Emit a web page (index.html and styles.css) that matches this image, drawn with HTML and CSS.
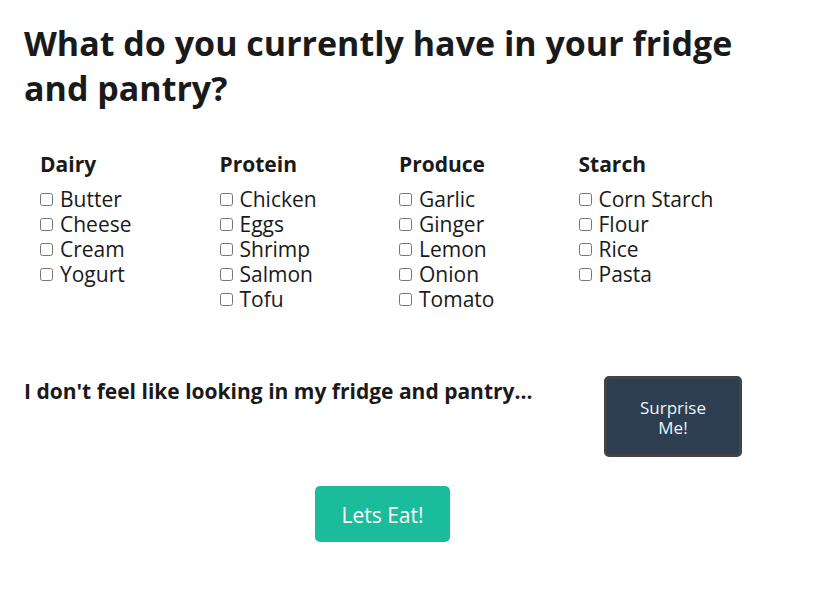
FILE: index.html
```html
<!DOCTYPE html>
<html lang="en">
<head>
<meta charset="utf-8">
<title>Fridge and pantry</title>
<link rel="stylesheet" href="styles.css">
</head>
<body>
<main class="page">
  <h1 class="title">What do you currently have in your fridge and pantry?</h1>
  <form>
    <div class="groups">
      <fieldset class="group">
        <legend>Dairy</legend>
        <label><input type="checkbox">Butter</label>
        <label><input type="checkbox">Cheese</label>
        <label><input type="checkbox">Cream</label>
        <label><input type="checkbox">Yogurt</label>
      </fieldset>
      <fieldset class="group">
        <legend>Protein</legend>
        <label><input type="checkbox">Chicken</label>
        <label><input type="checkbox">Eggs</label>
        <label><input type="checkbox">Shrimp</label>
        <label><input type="checkbox">Salmon</label>
        <label><input type="checkbox">Tofu</label>
      </fieldset>
      <fieldset class="group">
        <legend>Produce</legend>
        <label><input type="checkbox">Garlic</label>
        <label><input type="checkbox">Ginger</label>
        <label><input type="checkbox">Lemon</label>
        <label><input type="checkbox">Onion</label>
        <label><input type="checkbox">Tomato</label>
      </fieldset>
      <fieldset class="group">
        <legend>Starch</legend>
        <label><input type="checkbox">Corn Starch</label>
        <label><input type="checkbox">Flour</label>
        <label><input type="checkbox">Rice</label>
        <label><input type="checkbox">Pasta</label>
      </fieldset>
    </div>
    <div class="surprise">
      <h2>I don't feel like looking in my fridge and pantry...</h2>
      <button class="surprise-button" type="button">Surprise Me!</button>
    </div>
    <div class="actions">
      <button class="submit" type="submit">Lets Eat!</button>
    </div>
  </form>
</main>
</body>
</html>
```
FILE: styles.css
```css
* {
  box-sizing: border-box;
}

body {
  margin: 0;
  background: #fff;
  color: #1a1a1a;
  font-family: "Segoe UI", "Open Sans", "Noto Sans", sans-serif;
}

.page {
  padding: 21px 48px 24px 24px;
}

.title {
  margin: 0;
  font-size: 34px;
  font-weight: 700;
  line-height: 45px;
}

.groups {
  display: grid;
  grid-template-columns: repeat(4, 1fr);
  margin: 38px 7px 0 16px;
}

.group {
  min-width: 0;
  margin: 0;
  padding: 0;
  border: 0;
}

.group legend {
  padding: 0;
  margin-bottom: 8px;
  font-size: 21px;
  font-weight: 700;
  line-height: 30px;
}

.group label {
  display: flex;
  align-items: center;
  gap: 7px;
  font-size: 21px;
  font-weight: 400;
  line-height: 25px;
  white-space: nowrap;
}

.group input {
  flex: none;
  width: 13px;
  height: 13px;
  margin: 0;
}

.surprise {
  display: flex;
  justify-content: space-between;
  align-items: flex-start;
  margin-top: 64px;
  padding-right: 23px;
}

.surprise h2 {
  margin: 0;
  font-size: 21px;
  font-weight: 700;
  line-height: 30px;
}

button {
  font-family: inherit;
  border-radius: 5px;
  cursor: pointer;
}

.surprise-button {
  width: 138px;
  padding: 19px 24px 16px;
  border: 3px solid #444;
  background: #2c3e50;
  color: #ecf6fa;
  font-size: 17px;
  line-height: 20px;
}

.actions {
  display: flex;
  justify-content: center;
  margin-top: 29px;
  padding-right: 24px;
}

.submit {
  padding: 14px 26px 12px;
  border: 0;
  background: #1abc9c;
  color: #fff;
  font-size: 21px;
  line-height: 30px;
}
```
